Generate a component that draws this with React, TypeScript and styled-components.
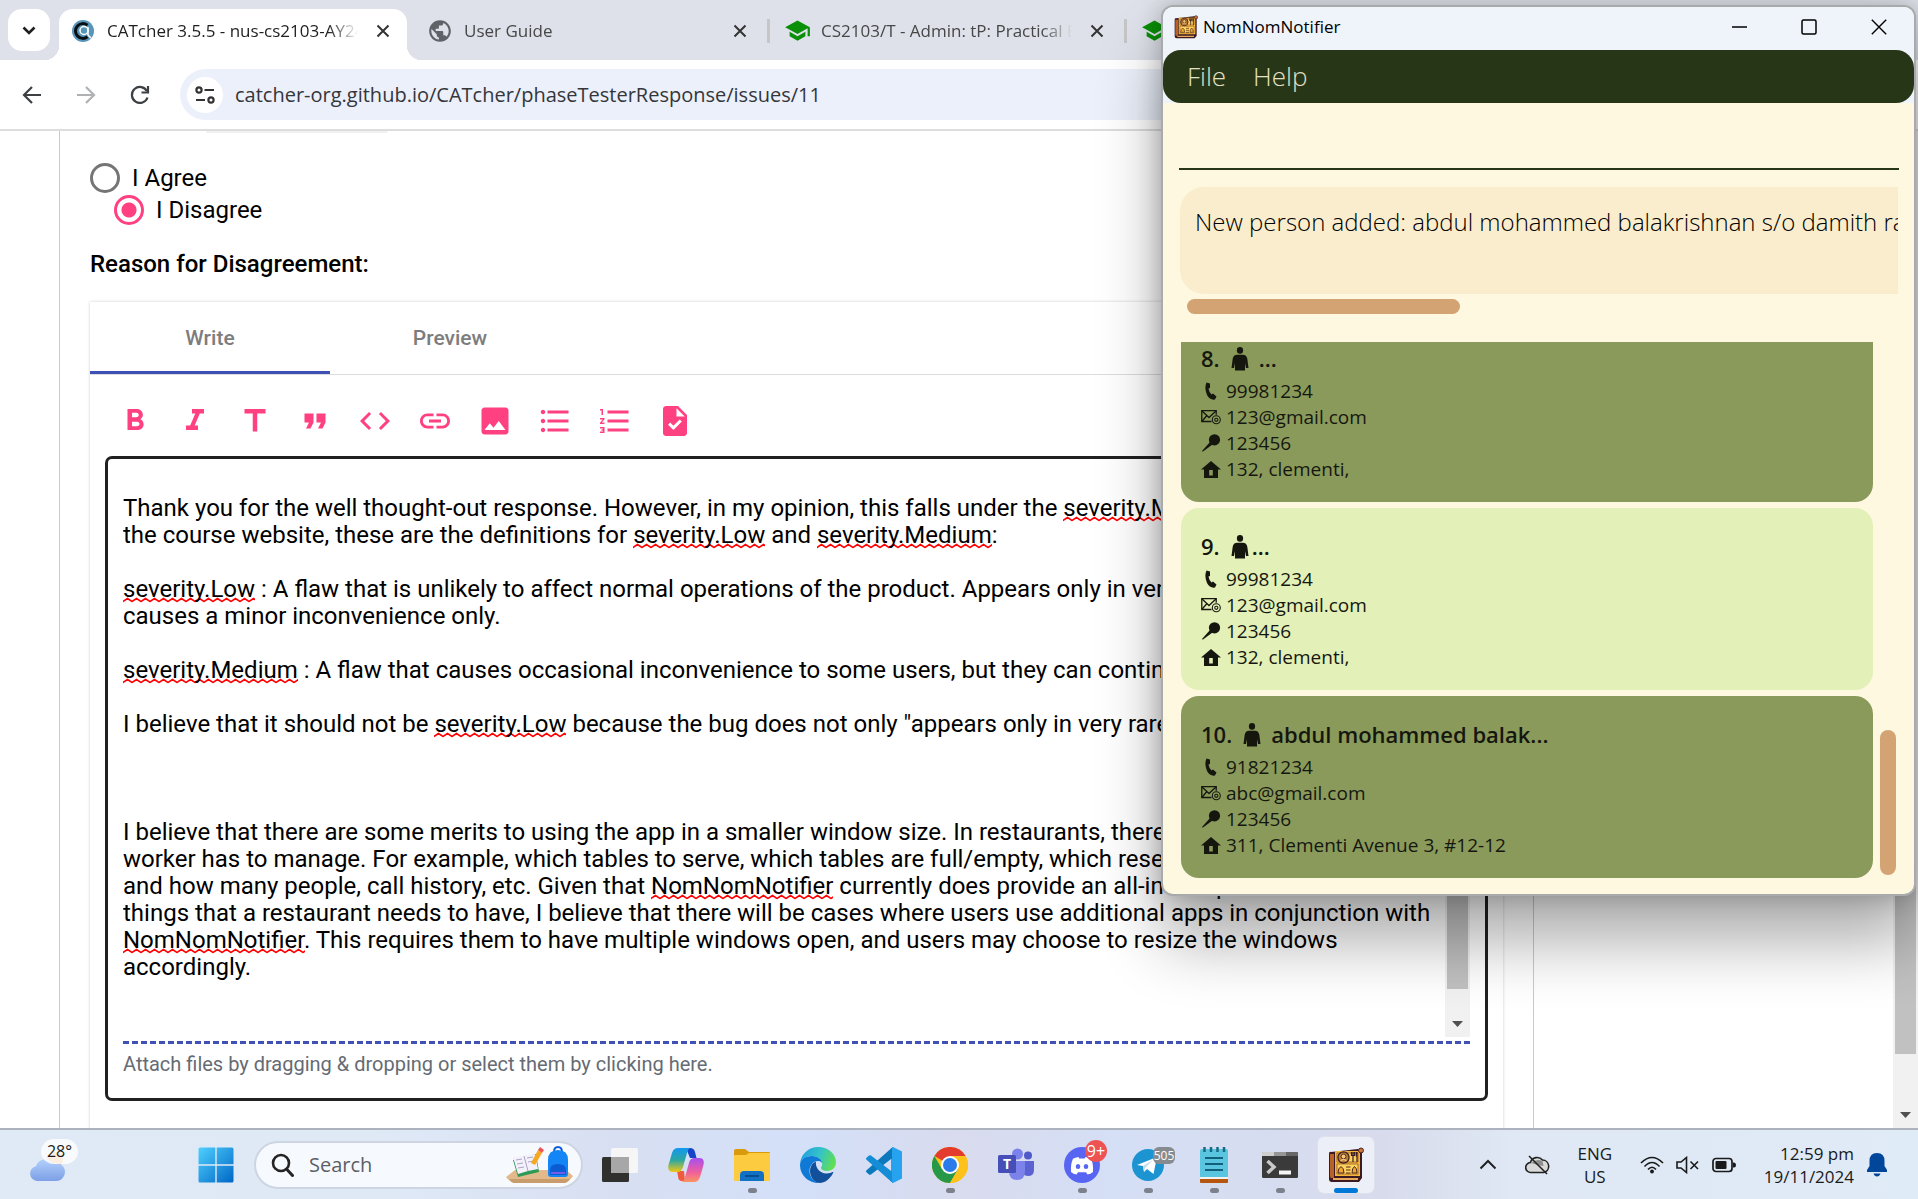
import React, { useMemo } from "react";
import styled, { createGlobalStyle, css } from "styled-components";
import {
  MdCode,
  MdFormatBold,
  MdFormatItalic,
  MdFormatListBulleted,
  MdFormatListNumbered,
  MdFormatQuote,
  MdImage,
  MdInsertLink,
  MdPublic,
  MdSchool,
  MdTask,
  MdTitle,
} from "react-icons/md";

const ui = `"Segoe UI", "Open Sans", "Noto Sans", sans-serif`;
const roboto = `Roboto, "Liberation Sans", sans-serif`;
const squiggle = `url("data:image/svg+xml,%3Csvg xmlns='http://www.w3.org/2000/svg' width='9' height='6'%3E%3Cpath d='M-1 4.5 L0 4.5 L4.5 1.5 L9 4.5 L10 4.5' fill='none' stroke='%23f00' stroke-width='1.6'/%3E%3C/svg%3E")`;

const GlobalStyle = createGlobalStyle`
  *, *::before, *::after { box-sizing: border-box; }
  body { margin: 0; background: #fff; overflow: hidden; }
  button, input, textarea { font: inherit; color: inherit; margin: 0; }
  button { border: 0; padding: 0; background: none; cursor: pointer; }
  svg { display: block; flex: none; }
`;

const Desktop = styled.div`
  position: relative;
  display: flex;
  flex-direction: column;
  height: 100vh;
  overflow: hidden;
  font-family: ${ui};
`;

/* ---------- browser chrome ---------- */

const TabStrip = styled.div`
  display: flex;
  align-items: flex-end;
  height: 60px;
  flex: none;
  padding-left: 8px;
  background: #dee1e9;
  overflow: hidden;
`;

const TabSearch = styled.button`
  display: grid;
  place-items: center;
  width: 42px;
  height: 42px;
  margin: 0 9px 9px 0;
  border-radius: 14px;
  background: #fff;
`;

const Tab = styled.div<{ $active?: boolean }>`
  position: relative;
  display: flex;
  align-items: center;
  flex: none;
  width: 348px;
  height: 51px;
  padding: 0 12px 8px 12px;
  border-radius: 14px 14px 0 0;
  font-size: 17px;
  line-height: 24px;
  color: ${(p) => (p.$active ? "#1f1f1f" : "#474747")};
  ${(p) =>
    p.$active &&
    css`
      background: #fff;
      &::before,
      &::after {
        content: "";
        position: absolute;
        bottom: 0;
        width: 14px;
        height: 14px;
      }
      &::before {
        left: -14px;
        background: radial-gradient(circle at 0 0, transparent 14px, #fff 14px);
      }
      &::after {
        right: -14px;
        background: radial-gradient(circle at 100% 0, transparent 14px, #fff 14px);
      }
    `}
`;

const TabIcon = styled.span`
  display: grid;
  place-content: center;
  width: 24px;
  margin-right: 12px;
`;

const TabTitle = styled.span`
  flex: 1;
  min-width: 0;
  overflow: hidden;
  white-space: nowrap;
  mask-image: linear-gradient(to right, #000 88%, transparent);
`;

const TabClose = styled.button`
  display: grid;
  place-items: center;
  width: 24px;
  height: 24px;
  margin-left: 13px;
`;

const TabDivider = styled.span<{ $hidden?: boolean }>`
  flex: none;
  width: 3px;
  height: 24px;
  margin: 0 3px 17px;
  background: ${(p) => (p.$hidden ? "transparent" : "#c6c6c8")};
`;

const AddressBar = styled.div`
  display: flex;
  align-items: center;
  flex: none;
  height: 71px;
  padding: 0 360px 0 5px;
  border-bottom: 2px solid #dcdddd;
  background: #fff;
`;

const NavButton = styled.button`
  display: grid;
  place-items: center;
  width: 54px;
  height: 48px;
`;

const Omnibox = styled.label`
  display: flex;
  align-items: center;
  flex: 1;
  height: 51px;
  margin-left: 13px;
  padding-left: 7px;
  border-radius: 26px;
  background: #ebf0fa;
`;

const SiteInfo = styled.span`
  display: grid;
  place-items: center;
  width: 36px;
  height: 36px;
  border-radius: 50%;
  background: #fff;
`;

const UrlInput = styled.input`
  flex: 1;
  min-width: 0;
  margin-left: 12px;
  padding: 0;
  border: 0;
  outline: 0;
  background: none;
  font-size: 20px;
  line-height: 28px;
  color: #35363a;
`;

/* ---------- web page ---------- */

const Viewport = styled.div`
  display: flex;
  flex: 1;
  min-height: 0;
  overflow: hidden;
  background: #fff;
  font-family: ${roboto};
`;

const Sheet = styled.main`
  flex: 1;
  min-width: 0;
  margin: 0 359px 0 59px;
  padding: 0 30px 0 30px;
  border: solid #bccce6;
  border-width: 0 1px;
`;

const ChipEdge = styled.div`
  width: 182px;
  height: 2px;
  margin-left: 116px;
  border-radius: 0 0 8px 8px;
  background: #f0f0f0;
`;

const Choices = styled.fieldset`
  display: flex;
  flex-direction: column;
  gap: 2px;
  margin: 30px 0 0;
  padding: 0;
  border: 0;
`;

const Choice = styled.label<{ $indent?: boolean }>`
  display: flex;
  align-items: center;
  gap: 12px;
  height: 30px;
  margin-left: ${(p) => (p.$indent ? 24 : 0)}px;
  font-size: 24px;
  line-height: 30px;
  color: #000;
`;

const Radio = styled.input`
  appearance: none;
  width: 30px;
  height: 30px;
  border: 3px solid #757575;
  border-radius: 50%;
  &:checked {
    border-color: #ff4081;
    background: radial-gradient(circle, #ff4081 7px, transparent 8px);
  }
`;

const Heading = styled.h2`
  margin: 23px 0 0;
  font-size: 24px;
  line-height: 32px;
  font-weight: 500;
  color: #000;
`;

const EditorCard = styled.section`
  height: 900px;
  margin-top: 22px;
  box-shadow: 0 0 3px rgba(0, 0, 0, 0.2);
`;

const EditorTabs = styled.div`
  display: flex;
  height: 73px;
  border-bottom: 1px solid #dcdcdc;
`;

const EditorTab = styled.button<{ $active?: boolean }>`
  width: 240px;
  padding-top: 2px;
  border-bottom: 3px solid ${(p) => (p.$active ? "#3f51b5" : "transparent")};
  font-size: 21px;
  line-height: 28px;
  font-weight: 500;
  color: #7d7d7d;
`;

const FormatBar = styled.div`
  display: flex;
  padding: 16px 15px 6px;
`;

const FormatButton = styled.button`
  display: grid;
  place-items: center;
  width: 60px;
  height: 60px;
  color: #ff4081;
  font-size: 36px;
`;

const EditorBox = styled.div`
  margin: -1px 15px 0;
  padding: 8px 15px 20px;
  border: 3px solid #212121;
  border-radius: 7px;
`;

const EditorScroll = styled.div`
  display: grid;
  grid-template-columns: 1fr 25px;
  height: 570px;
`;

const writing = css`
  grid-area: 1 / 1;
  width: 100%;
  height: 100%;
  margin: 0;
  padding: 28px 0 0;
  overflow: hidden;
`;

const SpellLayer = styled.div`
  ${writing}
`;

const SpellLine = styled.div`
  display: flex;
  align-items: flex-end;
  height: 27px;
`;

const Squiggle = styled.span`
  flex: none;
  height: 6px;
  background: ${squiggle} left bottom repeat-x;
`;

const WritingArea = styled.textarea`
  ${writing}
  display: block;
  white-space: pre;
  font-family: ${roboto};
  font-size: 24px;
  line-height: 27px;
  border: 0;
  outline: 0;
  resize: none;
  background: transparent;
  color: #000;
`;

const ScrollTrack = styled.div<{ $top: number; $bottom: number }>`
  display: flex;
  flex-direction: column;
  align-items: center;
  flex: none;
  width: 25px;
  padding: ${(p) => p.$top}px 2px 10px;
  background: #f1f1f1;
  &::before {
    content: "";
    flex: 1;
    width: 100%;
    margin-bottom: ${(p) => p.$bottom}px;
    background: #c1c1c1;
  }
`;

const Attach = styled.button`
  display: block;
  width: 100%;
  margin-top: 4px;
  padding-top: 6px;
  border-top: 3px dashed #3f51b5;
  text-align: left;
  font-size: 20px;
  line-height: 28px;
  color: #656b74;
`;

/* ---------- NomNomNotifier window ---------- */

const AppWindow = styled.section`
  position: absolute;
  top: 5px;
  right: 2px;
  display: flex;
  flex-direction: column;
  width: 755px;
  height: 891px;
  border: 2px solid #a8aaac;
  border-radius: 12px;
  background: #fef8e0;
  overflow: hidden;
  box-shadow: 0 46px 64px rgba(0, 0, 0, 0.32), 0 0 24px rgba(0, 0, 0, 0.24);
`;

const TitleBar = styled.header`
  display: flex;
  align-items: center;
  height: 43px;
  padding: 0 0 3px 11px;
  background: #eff3fa;
  font-size: 17px;
  line-height: 24px;
  color: #000;
`;

const WindowTitle = styled.h1`
  flex: 1;
  margin: 0 0 0 5px;
  font: inherit;
`;

const WindowButton = styled.button`
  display: grid;
  place-items: center;
  width: 70px;
  height: 40px;
`;

const MenuBarSeat = styled.div`
  background: #eff3fa;
`;

const MenuBar = styled.nav`
  display: flex;
  gap: 27px;
  height: 53px;
  padding: 0 24px;
  border-radius: 18px;
  background: #283618;
`;

const MenuButton = styled.button`
  font-size: 26px;
  line-height: 53px;
  font-weight: 300;
  color: #e4e0c4;
`;

const CommandInput = styled.input`
  height: 67px;
  margin: 0 15px 0 16px;
  padding: 20px 8px 0;
  border: 0;
  border-bottom: 2px solid #283618;
  outline: 0;
  background: none;
  font-size: 24px;
  flex: none;
`;

const ResultBox = styled.output`
  flex: none;
  height: 107px;
  margin: 17px 16px 0 17px;
  padding: 18px 0 0 15px;
  border-radius: 24px 0 0 24px;
  background: #faedcd;
  overflow: hidden;
  white-space: nowrap;
  font-size: 24px;
  line-height: 34px;
  font-weight: 300;
  color: #000;
`;

const ResultThumb = styled.div`
  flex: none;
  width: 273px;
  height: 15px;
  margin: 5px 0 28px 24px;
  border-radius: 8px;
  background: #d4a373;
`;

const PeoplePane = styled.div`
  display: flex;
  flex: 1;
  gap: 7px;
  min-height: 0;
  padding: 0 18px 16px 18px;
`;

const PeopleList = styled.ul`
  display: flex;
  flex: 1;
  flex-direction: column;
  justify-content: flex-end;
  gap: 6px;
  margin: 0;
  padding: 0;
  overflow: hidden;
  list-style: none;
`;

const ListThumb = styled.div`
  align-self: flex-end;
  width: 16px;
  height: 145px;
  margin-bottom: 3px;
  border-radius: 8px;
  background: #d4a373;
`;

const PersonCard = styled.li<{ $light?: boolean }>`
  flex: none;
  padding: 21px 20px 20px;
  border-radius: 18px;
  background: ${(p) => (p.$light ? "#e3f0b8" : "#8a9a5b")};
  color: #15170f;
`;

const PersonName = styled.h3<{ $tight?: boolean }>`
  display: flex;
  align-items: center;
  margin: 0 0 2px;
  font-size: 22px;
  line-height: 35px;
  font-weight: 600;
  svg {
    margin: 0 ${(p) => (p.$tight ? 3 : 10)}px 0 11px;
  }
`;

const Detail = styled.p`
  display: flex;
  align-items: center;
  gap: 5px;
  margin: 0;
  font-size: 19px;
  line-height: 26px;
`;

/* ---------- taskbar ---------- */

const TaskBar = styled.footer`
  display: flex;
  align-items: center;
  flex: none;
  height: 71px;
  padding: 0 31px 0 28px;
  border-top: 2px solid #adb3be;
  background: linear-gradient(
    to right,
    #dfeaf6 0%,
    #dfe9f6 20%,
    #d8dff2 32%,
    #d3e0f8 42%,
    #d9dbee 50%,
    #d5dff5 58%,
    #d8dbec 72%,
    #dfe8f4 79%,
    #dfebf7 100%
  );
  color: #1a1a1a;
`;

const Weather = styled.button`
  position: relative;
  width: 50px;
  height: 56px;
  margin-right: 120px;
`;

const WeatherBadge = styled.span`
  position: absolute;
  top: 2px;
  right: 0;
  width: 37px;
  border-radius: 13px;
  background: rgba(252, 252, 252, 0.88);
  font-size: 16px;
  line-height: 25px;
  text-align: center;
`;

const SearchPill = styled.label`
  display: flex;
  align-items: center;
  width: 329px;
  height: 48px;
  margin: 0 4px 0 20px;
  padding: 0 7px 0 15px;
  border: 2px solid #cdd5e3;
  border-radius: 24px;
  background: #f6f9fd;
`;

const SearchInput = styled.input`
  flex: 1;
  min-width: 0;
  margin-left: 15px;
  padding: 0;
  border: 0;
  outline: 0;
  background: none;
  font-size: 20px;
  line-height: 28px;
  &::placeholder {
    color: #5c5f66;
    opacity: 1;
  }
`;

const TaskSlot = styled.button<{ $state?: "open" | "active" }>`
  position: relative;
  display: grid;
  place-items: center;
  width: 56px;
  height: 56px;
  margin: 0 5px;
  border-radius: 6px;
  ${(p) => p.$state === "active" && "background: #eceff8; box-shadow: 0 0 0 1px #dde1ec;"}
  &::after {
    content: "";
    position: absolute;
    bottom: 0;
    height: 5px;
    border-radius: 3px;
    width: ${(p) => (p.$state === "active" ? 24 : p.$state === "open" ? 9 : 0)}px;
    background: ${(p) => (p.$state === "active" ? "#0078d7" : "#7c818c")};
  }
`;

const Badge = styled.span<{ $grey?: boolean }>`
  position: absolute;
  top: ${(p) => (p.$grey ? 10 : 3)}px;
  right: ${(p) => (p.$grey ? 1 : 3)}px;
  width: 22px;
  border-radius: ${(p) => (p.$grey ? 6 : 11)}px;
  background: ${(p) => (p.$grey ? "#878b8f" : "#ee5353")};
  color: #fff;
  font-size: ${(p) => (p.$grey ? 12 : 16)}px;
  line-height: ${(p) => (p.$grey ? 17 : 22)}px;
  text-align: center;
`;

const Tray = styled.div`
  display: flex;
  align-items: center;
  gap: 28px;
  margin-left: auto;
  font-size: 17px;
  line-height: 23px;
`;

const Language = styled.button`
  width: 34px;
  display: flex;
  flex-direction: column;
  align-items: center;
`;

const QuickSettings = styled.button`
  display: flex;
  align-items: center;
  gap: 12px;
`;

const ClockGroup = styled.button`
  display: flex;
  align-items: center;
  gap: 13px;
  text-align: right;
`;

const ClockText = styled.span`
  display: flex;
  flex-direction: column;
`;

/* ---------- drawings ---------- */

const CloseGlyph = () => (
  <svg width="14" height="14" viewBox="0 0 14 14" stroke="#333" strokeWidth="2">
    <path d="M1.5 1.5 12.5 12.5M12.5 1.5 1.5 12.5" />
  </svg>
);

const DownArrow = () => (
  <svg width="11" height="6" viewBox="0 0 11 6" fill="#505050">
    <path d="M0 0h11L5.500 6z" />
  </svg>
);

const CatcherLogo = () => (
  <svg width="22" height="22" viewBox="0 0 22 22" fill="none">
    <circle cx="11" cy="11" r="11" fill="#5796b8" />
    <path d="M15.500 5.200A7.400 7.400 0 1 0 15.500 16.800" stroke="#0b0f12" strokeWidth="3" />
    <circle cx="12" cy="10.500" r="4" stroke="#fff" strokeWidth="1.500" />
    <path d="M16 7v8l3 3" stroke="#fff" strokeWidth="1.500" />
  </svg>
);

const BackArrow = ({ color = "#3c4043", flip = false }: { color?: string; flip?: boolean }) => (
  <svg width="20" height="20" viewBox="0 0 20 20" fill="none" stroke={color} strokeWidth="2.200">
    <path d={flip ? "M1 10h17M10 2l8 8-8 8" : "M19 10H2M10 2l-8 8 8 8"} />
  </svg>
);

const ReloadGlyph = () => (
  <svg width="20" height="20" viewBox="0 0 20 20" fill="none" stroke="#3c4043" strokeWidth="2.200">
    <path d="M17.500 12.500A8 8 0 1 1 17 6.200" />
    <path d="M18 1v6.500h-6.500" />
  </svg>
);

const TuneGlyph = () => (
  <svg width="20" height="18" viewBox="0 0 20 18" fill="none" stroke="#333" strokeWidth="2.200">
    <circle cx="4" cy="4" r="2.600" />
    <path d="M9.500 4H19M1 14h9" />
    <circle cx="16" cy="14" r="2.600" />
  </svg>
);

const RecipeBook = ({ size }: { size: number }) => (
  <svg width={size} height={size} viewBox="0 0 36 36">
    <path d="M3 5 Q1 4 1 7V32Q1 35 4 35H31L34 31V4L30 2z" fill="#3b1a22" />
    <path d="M2 7h4v24H3q-1 0-1-2z" fill="#b8622a" />
    <path d="M7 4h25v25H7z" fill="#f2b73c" />
    <path d="M5 31h25v2H5z" fill="#e9a75a" />
    <path d="M9 6h21v9H9zM9 17h21v10H9z" fill="#fbd35e" stroke="#8a4c1c" strokeWidth="0.700" />
    <circle cx="15.500" cy="10.500" r="5.600" fill="#b57a34" stroke="#3b1a22" strokeWidth="1.200" />
    <circle cx="15.500" cy="9.500" r="2.400" fill="#f4c878" stroke="#3b1a22" strokeWidth="0.800" />
    <path d="M12.500 14q3-3 6 0" stroke="#f4c878" strokeWidth="1.200" fill="none" />
    <path d="M25 5v10M29 5v10M23.500 5v3.500h3V5M28.300 5v4.500" stroke="#3b1a22" strokeWidth="1.200" fill="none" />
    <path d="M10 26q0-5 3-6.500 3 1.500 3 6.500zM24 26q0-5 2.500-6.500Q29 21 29 26z" fill="#f0a62f" stroke="#3b1a22" strokeWidth="0.900" />
    <path d="M18 20h4.500M18 23h4.500M18 26h4.500" stroke="#5a2b14" strokeWidth="1.100" />
    <circle cx="33" cy="3.500" r="2.500" fill="#c8743a" stroke="#3b1a22" strokeWidth="0.900" />
  </svg>
);

const PersonGlyph = () => (
  <svg width="18" height="24" viewBox="0 0 18 24" fill="currentColor">
    <ellipse cx="9" cy="3.400" rx="3.100" ry="3.300" />
    <path d="M6 7.800h6q3.500.2 4.300 4l1.200 9.200h-2.500L14 16v7.500H4V16l-1 5H.5l1.200-9.200Q2.500 8 6 7.800z" />
  </svg>
);

const PhoneGlyph = () => (
  <svg width="20" height="18" viewBox="0 0 20 18" fill="currentColor">
    <path d="M5.500 0.500 9 1.500 9 6 7.500 6.500Q8 10 10.500 12.500L12 11.500 15.500 14.500 14 17.500Q9 18.500 6 13Q3 6 5.500 0.500z" />
  </svg>
);

const MailGlyph = () => (
  <svg width="20" height="16" viewBox="0 0 20 16" fill="none" stroke="currentColor" strokeWidth="1.300">
    <path d="M10.500 12.500H.8V1.700h14.400v4" />
    <path d="M.8 1.700 8 8.500l7.200-6.800M.8 12.500 5.500 7" />
    <circle cx="15.300" cy="10.800" r="4" strokeWidth="1.100" />
    <circle cx="15.300" cy="10.800" r="1.600" strokeWidth="1.100" />
  </svg>
);

const PinGlyph = () => (
  <svg width="20" height="18" viewBox="0 0 20 18" fill="currentColor">
    <circle cx="13.500" cy="5.800" r="5.600" />
    <path d="M9 8l2.500 2.500L2 17.500.8 17.200z" />
  </svg>
);

const HouseGlyph = () => (
  <svg width="20" height="17" viewBox="0 0 20 17" fill="currentColor" fillRule="evenodd">
    <path d="M10 0 20 8.500H17V17H3V8.500H0zM8.200 9v5.500h3.600V9z" />
  </svg>
);

const CloudSun = () => (
  <svg width="36" height="30" viewBox="0 0 36 30">
    <defs>
      <linearGradient id="cloud" x1="0" y1="0" x2="0" y2="1">
        <stop offset="0" stopColor="#b3d0fb" />
        <stop offset="1" stopColor="#7c9fe6" />
      </linearGradient>
    </defs>
    <circle cx="26" cy="7" r="8" fill="#f08a24" />
    <path d="M8 29a7.500 7.500 0 0 1-1-14.800A9.500 9.500 0 0 1 24 11.500 9 9 0 1 1 27 29z" fill="url(#cloud)" />
  </svg>
);

const WeatherArt = styled.span`
  position: absolute;
  left: 1px;
  bottom: 11px;
`;

const StartLogo = () => (
  <svg width="36" height="36" viewBox="0 0 36 36">
    <defs>
      <linearGradient id="win" x1="0" y1="0" x2="1" y2="1">
        <stop offset="0" stopColor="#4fd0ff" />
        <stop offset="1" stopColor="#0067c5" />
      </linearGradient>
    </defs>
    <path
      fill="url(#win)"
      d="M2 .5h15.300v16.800H.5V2Q.5.5 2 .5zM18.700.5H34q1.500 0 1.500 1.500v15.300H18.700zM.5 18.700h16.800v16.800H2q-1.500 0-1.500-1.500zM18.700 18.700h16.800V34q0 1.500-1.500 1.500H18.700z"
    />
  </svg>
);

const SearchGlyph = () => (
  <svg width="23" height="24" viewBox="0 0 23 24" fill="none" stroke="#242424" strokeWidth="2.600">
    <circle cx="10" cy="10" r="8" />
    <path d="m15.500 16 6 6.500" strokeLinecap="round" strokeWidth="3" />
  </svg>
);

const SchoolArt = () => (
  <svg width="68" height="38" viewBox="0 0 68 38">
    <path d="M0 31 9 24H60L67 30Q62 37 58 37H8Q4 36 0 31z" fill="#e2b98a" />
    <path d="M3 33H64Q61 37 58 37H8Q5 36 3 33z" fill="#c99c6c" />
    <path d="M7 14 30 8 33 26 12 31z" fill="#2f9a55" />
    <path d="M7 11 18 10 29 8 32 23 22 25 12 28z" fill="#f4f1fb" />
    <path d="M18 10 22 25M10 14l6-1M11 18l6-1M12 22l6-1M21 12l6-1M22 16l6-1" stroke="#a9a3c8" fill="none" />
    <path d="M25 17 32 4 36 7 29 19z" fill="#f6a821" />
    <path d="M32 4 34 1 38 4 36 7z" fill="#ef5350" />
    <path d="M48 6q0-5 4-5t4 5" stroke="#0d5fd6" strokeWidth="2" fill="none" />
    <path d="M42 14q0-10 10-10t10 10v14q0 3-3 3H45q-3 0-3-3z" fill="#1385f5" />
    <path d="M44 24q0-6 8-6t8 6v5H44z" fill="#0b5bd3" />
    <path d="M45 27h14" stroke="#9a5df0" strokeWidth="1.500" />
  </svg>
);

const TaskViewGlyph = () => (
  <svg width="36" height="36" viewBox="0 0 36 36">
    <rect x="0" y="10" width="27" height="25" rx="1.500" fill="#30302f" />
    <rect x="9" y="1" width="27" height="25" rx="1.500" fill="#f6f6f6" />
    <path d="M9 10h18v16H10q-1 0-1-1z" fill="#a7a7a7" />
  </svg>
);

const CopilotLogo = () => (
  <svg width="36" height="34" viewBox="0 0 36 34">
    <defs>
      <linearGradient id="cpA" x1="0" y1="0" x2="0" y2="1">
        <stop offset="0" stopColor="#1597f0" />
        <stop offset=".5" stopColor="#2aa7a4" />
        <stop offset="1" stopColor="#f2c812" />
      </linearGradient>
      <linearGradient id="cpB" x1="0" y1="0" x2="0" y2="1">
        <stop offset="0" stopColor="#a64ff0" />
        <stop offset=".6" stopColor="#f0609c" />
        <stop offset="1" stopColor="#fa9461" />
      </linearGradient>
    </defs>
    <path d="M18 0h4q4 0 5 4l1.500 6H22z" fill="#1745c7" />
    <path d="M17 33h-3q-4 0-4-5l-1-5h7z" fill="#ef5b3c" />
    <path d="M10 0h12q-2 1-3 5l-4 14q-1 5-6 5H5Q-1 24 .5 17L4 5q1.500-5 6-5z" fill="url(#cpA)" />
    <path d="M26 34H14q2-1 3-5l4-14q1-5 6-5h4q6 0 4.500 7L32 29q-1.500 5-6 5z" fill="url(#cpB)" />
  </svg>
);

const FolderLogo = () => (
  <svg width="36" height="34" viewBox="0 0 36 34">
    <path d="M0 3q0-2 2-2h9l4 3h20q1 0 1 1v8H0z" fill="#d99a0c" />
    <path d="M0 8q0-1 1-1h11l3-2h21v27q0 1-1 1H1q-1 0-1-1z" fill="#fdcb3f" />
    <path d="M6 33v-6q0-4 4-4h16q4 0 4 4v6z" fill="#1271c4" />
    <path d="M11 28h14" stroke="#0a4a8c" strokeWidth="1.800" />
  </svg>
);

const EdgeLogo = () => (
  <svg width="36" height="36" viewBox="0 0 36 36">
    <defs>
      <linearGradient id="edA" x1="0" y1=".3" x2="1" y2=".6">
        <stop offset="0" stopColor="#1f9fe0" />
        <stop offset=".5" stopColor="#35c3c8" />
        <stop offset="1" stopColor="#63e04c" />
      </linearGradient>
    </defs>
    <path d="M0 17A18 18 0 0 1 18 0c11 0 18 7.500 18 15 0 6-4.500 9-9 9-4 0-6-1.500-6-3 0-1 1.200-1.500 1.200-4C22 13 18 9 12 9 5 9 0 14 0 17z" fill="url(#edA)" />
    <path d="M0 18C0 13 5 9 12 9c6 0 10 4 10.200 7-1-1.500-3-2-4.200-2-5 0-8.500 5-8.500 10 0 6 4.500 11 10 12A18 18 0 0 1 0 18z" fill="#0f7ad6" />
    <path d="M10 24c0-4 2-8 6-9.500-1 5 3 12 10.500 12 3 0 5-1 6-1.500.8-.3 1 .3.600 1C30 32 25 36 19.500 36 14 35.500 10 30 10 24z" fill="#12509c" />
  </svg>
);

const CodeLogo = () => (
  <svg width="36" height="36" viewBox="0 0 36 36">
    <path d="M27 0 36 4.500v27L27 36 25 34V2z" fill="#26a2ee" />
    <path d="M27 10.500 5 27.500q-1 .6-2 0l-2.500-2.300q-1-1 0-2L25 1.500 27 0z" fill="#0d79bd" />
    <path d="M27 25.500 5 8.500q-1-.6-2 0L.5 10.800q-1 1 0 2L25 34.500 27 36z" fill="#148dd6" />
    <path d="M27 0v36l-1-1V1z" fill="#26a2ee" />
  </svg>
);

const ChromeLogo = () => (
  <svg width="36" height="36" viewBox="0 0 36 36">
    <circle cx="18" cy="18" r="18" fill="#fcc21b" />
    <path d="M18 18 2.400 9A18 18 0 0 1 33.600 9z" fill="#e33b2e" />
    <path d="M18 18 10.200 22.500 2.400 9a18 18 0 0 0 15.600 27l7.800-13.500z" fill="#279847" />
    <path d="M18 9h15.600A18 18 0 0 1 18 36l8-13.500z" fill="#fcc21b" />
    <circle cx="18" cy="18" r="9" fill="#fff" />
    <circle cx="18" cy="18" r="7" fill="#2c7bea" />
  </svg>
);

const TeamsTile = styled.span`
  position: relative;
  display: block;
`;

const TeamsLetter = styled.span`
  position: absolute;
  left: 0;
  top: 7px;
  width: 18px;
  font-size: 14px;
  line-height: 18px;
  font-weight: 700;
  color: #fff;
`;

const TeamsLogo = () => (
  <TeamsTile>
    <svg width="36" height="34" viewBox="0 0 36 34">
      <circle cx="19.500" cy="6" r="5.500" fill="#7b83eb" />
      <circle cx="30" cy="7.500" r="4" fill="#5059c9" />
      <path d="M25 13h11v9q0 6-6 6-3 0-5-2z" fill="#5b63d3" />
      <path d="M11 13h16v10q0 9-8 9t-8-9z" fill="#7b83eb" />
      <rect x="0" y="7" width="18" height="18" rx="1.500" fill="#464eb8" />
    </svg>
    <TeamsLetter>T</TeamsLetter>
  </TeamsTile>
);

const DiscordLogo = () => (
  <svg width="36" height="36" viewBox="0 0 36 36">
    <circle cx="18" cy="18" r="18" fill="#5865f2" />
    <path
      fill="#fff"
      fillRule="evenodd"
      d="M14.500 10q-3.500.5-5.500 1.800Q6.500 17 7 25q2.500 2 5.500 2.500l1.500-2.300h8l1.500 2.300Q26.500 27 29 25q.5-8-2-13.200Q25 10.500 21.500 10l-.8 1.500h-5.400zM14 17a2.300 2.500 0 1 0 0 5 2.300 2.500 0 0 0 0-5zm8 0a2.300 2.500 0 1 0 0 5 2.300 2.500 0 0 0 0-5z"
    />
  </svg>
);

const TelegramLogo = () => (
  <svg width="34" height="34" viewBox="0 0 34 34">
    <circle cx="17" cy="17" r="16" fill="#1d94d2" />
    <path d="M6 17 26 9l-3.500 17-6.500-5-3 3-1-6z" fill="#fff" />
    <path d="m12 18 10-6-8 8-1 4z" fill="#c1dbea" />
  </svg>
);

const NotepadLogo = () => (
  <svg width="28" height="36" viewBox="0 0 28 36">
    <path d="M0 30h28v5q0 1-1 1H1q-1 0-1-1z" fill="#b7560f" />
    <path d="M0 28h28v4H0z" fill="#f2f2f2" />
    <path d="M0 4q0-2 2-2h24q2 0 2 2v26H0z" fill="#59c5de" />
    <path d="M4.500 0v5M11 0v5M17.500 0v5M24 0v5" stroke="#176a86" strokeWidth="2.500" />
    <path d="M5 11h18M5 17h18M5 23h18" stroke="#12617c" strokeWidth="2" />
  </svg>
);

const TerminalLogo = () => (
  <svg width="36" height="28" viewBox="0 0 36 28">
    <rect y="1" width="36" height="26" rx="1.500" fill="#3a3a3a" />
    <path d="M0 5V2q0-1 1-1h11v4z" fill="#cfcfcf" />
    <path d="M12 1h12v4H12z" fill="#969696" />
    <path d="M24 1h11q1 0 1 1v3H24z" fill="#676767" />
    <path d="m5.500 10 6.500 6-6.500 6" stroke="#c9c9c9" strokeWidth="3.500" fill="none" />
    <rect x="17" y="19.500" width="12" height="4" fill="#f5f5f5" />
  </svg>
);

const ChevronUp = () => (
  <svg width="18" height="11" viewBox="0 0 18 11" fill="none" stroke="#222" strokeWidth="2">
    <path d="m1.500 9.500 7.500-7.500 7.500 7.500" />
  </svg>
);

const OfflineCloud = () => (
  <svg width="25" height="20" viewBox="0 0 25 20" fill="none" stroke="#222" strokeWidth="1.600">
    <path d="M6 17.500a5 5 0 0 1-.6-10A7 7 0 0 1 17.500 5 6.300 6.300 0 0 1 18.500 17.500z" fill="#d9d9d9" />
    <path d="M6 8Q12 3 17.500 6l1 5-6-1z" fill="#8d8d8d" stroke="none" />
    <path d="M4 1l18 18" />
  </svg>
);

const WifiGlyph = () => (
  <svg width="24" height="18" viewBox="0 0 24 18" fill="none" stroke="#1a1a1a" strokeWidth="1.700">
    <path d="M1 7Q12-4 23 7M4.500 10.500Q12 2.500 19.500 10.500M8 13.500Q12 9 16 13.500" />
    <circle cx="12" cy="15.500" r="1.900" fill="#1a1a1a" stroke="none" />
  </svg>
);

const MuteGlyph = () => (
  <svg width="24" height="18" viewBox="0 0 24 18" fill="none" stroke="#1a1a1a" strokeWidth="1.600">
    <path d="M1 6h4l5.500-4.500v15L5 12H1zM14.500 5.500l7.500 7.500M22 5.500 14.500 13" />
  </svg>
);

const BatteryGlyph = () => (
  <svg width="24" height="16" viewBox="0 0 24 16" fill="none">
    <rect x="1" y="1.500" width="19" height="13" rx="3" stroke="#1a1a1a" strokeWidth="1.700" />
    <rect x="3.500" y="4" width="11" height="8" rx="1" fill="#1a1a1a" />
    <path d="M21 5.500h1q2 0 2 2.500t-2 2.500h-1z" fill="#1a1a1a" />
  </svg>
);

const BellGlyph = () => (
  <svg width="20" height="24" viewBox="0 0 20 24" fill="#00469b">
    <path d="M10 0q7.500 0 7.500 8v5l2.500 4v2H0v-2l2.500-4V8Q2.500 0 10 0zM6.500 20.500h7q-1 3-3.500 3t-3.500-3z" />
  </svg>
);

/* ---------- content ---------- */

const response = `Thank you for the well thought-out response. However, in my opinion, this falls under the severity.Medium label. From
the course website, these are the definitions for severity.Low and severity.Medium:

severity.Low : A flaw that is unlikely to affect normal operations of the product. Appears only in very rare situations and
causes a minor inconvenience only.

severity.Medium : A flaw that causes occasional inconvenience to some users, but they can continue to use the product.

I believe that it should not be severity.Low because the bug does not only "appears only in very rare situations".



I believe that there are some merits to using the app in a smaller window size. In restaurants, there are many things a
worker has to manage. For example, which tables to serve, which tables are full/empty, which reservations are at what time
and how many people, call history, etc. Given that NomNomNotifier currently does provide an all-in-one place for the
things that a restaurant needs to have, I believe that there will be cases where users use additional apps in conjunction with
NomNomNotifier. This requires them to have multiple windows open, and users may choose to resize the windows
accordingly.`;

function findMisspellings(text: string) {
  const pen = document.createElement("canvas").getContext("2d")!;
  pen.font = `24px ${roboto}`;
  return text.split("\n").map((line) => {
    let end = 0;
    return [...line.matchAll(/severity\.(?:Low|Medium)|NomNomNotifier/g)].map((m) => {
      const from = pen.measureText(line.slice(0, m.index)).width;
      const width = pen.measureText(m[0]).width;
      const gap = from - end;
      end = from + width;
      return { gap, width };
    });
  });
}

const SpellMarks = ({ text }: { text: string }) => {
  const lines = useMemo(() => findMisspellings(text), [text]);
  return (
    <SpellLayer aria-hidden="true">
      {lines.map((marks, i) => (
        <SpellLine key={i}>
          {marks.map((m, j) => (
            <Squiggle key={j} style={{ marginLeft: m.gap, width: m.width }} />
          ))}
        </SpellLine>
      ))}
    </SpellLayer>
  );
};

const formats = [
  { label: "Bold", Icon: MdFormatBold },
  { label: "Italic", Icon: MdFormatItalic },
  { label: "Heading", Icon: MdTitle },
  { label: "Quote", Icon: MdFormatQuote },
  { label: "Code", Icon: MdCode },
  { label: "Link", Icon: MdInsertLink },
  { label: "Image", Icon: MdImage },
  { label: "Bulleted list", Icon: MdFormatListBulleted },
  { label: "Numbered list", Icon: MdFormatListNumbered },
  { label: "Task", Icon: MdTask },
];

const people = [
  { no: 8, name: "...", phone: "99981234", mail: "123@gmail.com", postal: "123456", home: "132, clementi," },
  { no: 9, name: "...", tight: true, phone: "99981234", mail: "123@gmail.com", postal: "123456", home: "132, clementi," },
  {
    no: 10,
    name: "abdul mohammed balak...",
    phone: "91821234",
    mail: "abc@gmail.com",
    postal: "123456",
    home: "311, Clementi Avenue 3, #12-12",
  },
];

const BrowserTab = ({ title, icon, active }: { title: string; icon: React.ReactNode; active?: boolean }) => (
  <Tab $active={active}>
    <TabIcon>{icon}</TabIcon>
    <TabTitle>{title}</TabTitle>
    <TabClose aria-label="Close tab">
      <CloseGlyph />
    </TabClose>
  </Tab>
);

const Browser = () => (
  <>
    <TabStrip>
      <TabSearch aria-label="Search tabs">
        <svg width="14" height="9" viewBox="0 0 14 9" fill="none" stroke="#1f1f1f" strokeWidth="2.600">
          <path d="m1.500 1.500 5.500 5.500 5.500-5.500" />
        </svg>
      </TabSearch>
      <BrowserTab active title="CATcher 3.5.5 - nus-cs2103-AY2425S1" icon={<CatcherLogo />} />
      <TabDivider $hidden />
      <BrowserTab title="User Guide" icon={<MdPublic size={26} color="#5f6368" />} />
      <TabDivider />
      <BrowserTab title="CS2103/T - Admin: tP: Practical Exam" icon={<MdSchool size={27} color="#0a8f08" />} />
      <TabDivider />
      <BrowserTab title="CS2103/T" icon={<MdSchool size={27} color="#0a8f08" />} />
    </TabStrip>
    <AddressBar>
      <NavButton aria-label="Back">
        <BackArrow />
      </NavButton>
      <NavButton aria-label="Forward">
        <BackArrow flip color="#b0b1b3" />
      </NavButton>
      <NavButton aria-label="Reload">
        <ReloadGlyph />
      </NavButton>
      <Omnibox>
        <SiteInfo>
          <TuneGlyph />
        </SiteInfo>
        <UrlInput aria-label="Address" defaultValue="catcher-org.github.io/CATcher/phaseTesterResponse/issues/11" />
      </Omnibox>
    </AddressBar>
  </>
);

const Page = () => (
  <Viewport>
    <Sheet>
      <ChipEdge />
      <Choices>
        <Choice>
          <Radio type="radio" name="verdict" />I Agree
        </Choice>
        <Choice $indent>
          <Radio type="radio" name="verdict" defaultChecked />I Disagree
        </Choice>
      </Choices>
      <Heading>Reason for Disagreement:</Heading>
      <EditorCard>
        <EditorTabs>
          <EditorTab $active>Write</EditorTab>
          <EditorTab>Preview</EditorTab>
        </EditorTabs>
        <FormatBar>
          {formats.map(({ label, Icon }) => (
            <FormatButton key={label} aria-label={label}>
              <Icon />
            </FormatButton>
          ))}
        </FormatBar>
        <EditorBox>
          <EditorScroll>
            <SpellMarks text={response} />
            <WritingArea aria-label="Reason" spellCheck={false} defaultValue={response} />
            <ScrollTrack $top={25} $bottom={32}>
              <DownArrow />
            </ScrollTrack>
          </EditorScroll>
          <Attach>Attach files by dragging &amp; dropping or select them by clicking here.</Attach>
        </EditorBox>
      </EditorCard>
    </Sheet>
    <ScrollTrack $top={750} $bottom={58}>
      <DownArrow />
    </ScrollTrack>
  </Viewport>
);

const Notifier = () => (
  <AppWindow>
    <TitleBar>
      <RecipeBook size={24} />
      <WindowTitle>NomNomNotifier</WindowTitle>
      <WindowButton aria-label="Minimise">
        <svg width="15" height="2" viewBox="0 0 15 2">
          <path d="M0 1h15" stroke="#000" strokeWidth="1.400" />
        </svg>
      </WindowButton>
      <WindowButton aria-label="Maximise">
        <svg width="16" height="16" viewBox="0 0 16 16" fill="none" stroke="#000" strokeWidth="1.500">
          <rect x="1" y="1" width="14" height="14" rx="1.500" />
        </svg>
      </WindowButton>
      <WindowButton aria-label="Close">
        <svg width="16" height="16" viewBox="0 0 16 16" stroke="#000" strokeWidth="1.400">
          <path d="m.8.8 14.400 14.400M15.200.8.8 15.200" />
        </svg>
      </WindowButton>
    </TitleBar>
    <MenuBarSeat>
      <MenuBar>
        <MenuButton>File</MenuButton>
        <MenuButton>Help</MenuButton>
      </MenuBar>
    </MenuBarSeat>
    <CommandInput aria-label="Command" />
    <ResultBox>New person added: abdul mohammed balakrishnan s/o damith rajapakse</ResultBox>
    <ResultThumb />
    <PeoplePane>
      <PeopleList>
        {people.map((p) => (
          <PersonCard key={p.no} $light={p.no % 2 === 1}>
            <PersonName $tight={p.tight}>
              {p.no}. <PersonGlyph /> {p.name}
            </PersonName>
            <Detail>
              <PhoneGlyph />
              {p.phone}
            </Detail>
            <Detail>
              <MailGlyph />
              {p.mail}
            </Detail>
            <Detail>
              <PinGlyph />
              {p.postal}
            </Detail>
            <Detail>
              <HouseGlyph />
              {p.home}
            </Detail>
          </PersonCard>
        ))}
      </PeopleList>
      <ListThumb />
    </PeoplePane>
  </AppWindow>
);

const apps: { label: string; art: React.ReactNode; state?: "open" | "active" }[] = [
  { label: "Task view", art: <TaskViewGlyph /> },
  { label: "Copilot", art: <CopilotLogo /> },
  { label: "File Explorer", art: <FolderLogo />, state: "open" },
  { label: "Edge", art: <EdgeLogo /> },
  { label: "Visual Studio Code", art: <CodeLogo /> },
  { label: "Chrome", art: <ChromeLogo />, state: "open" },
  { label: "Teams", art: <TeamsLogo /> },
  {
    label: "Discord",
    art: (
      <>
        <DiscordLogo />
        <Badge>9+</Badge>
      </>
    ),
    state: "open",
  },
  {
    label: "Telegram",
    art: (
      <>
        <TelegramLogo />
        <Badge $grey>505</Badge>
      </>
    ),
    state: "open",
  },
  { label: "Notepad", art: <NotepadLogo />, state: "open" },
  { label: "Terminal", art: <TerminalLogo />, state: "open" },
  { label: "NomNomNotifier", art: <RecipeBook size={36} />, state: "active" },
];

const BottomBar = () => (
  <TaskBar>
    <Weather>
      <WeatherArt>
        <CloudSun />
      </WeatherArt>
      <WeatherBadge>28°</WeatherBadge>
    </Weather>
    <button aria-label="Start">
      <StartLogo />
    </button>
    <SearchPill>
      <SearchGlyph />
      <SearchInput placeholder="Search" />
      <SchoolArt />
    </SearchPill>
    {apps.map((a) => (
      <TaskSlot key={a.label} aria-label={a.label} $state={a.state}>
        {a.art}
      </TaskSlot>
    ))}
    <Tray>
      <button aria-label="Hidden icons">
        <ChevronUp />
      </button>
      <OfflineCloud />
      <Language>
        <span>ENG</span>
        <span>US</span>
      </Language>
      <QuickSettings aria-label="Quick settings">
        <WifiGlyph />
        <MuteGlyph />
        <BatteryGlyph />
      </QuickSettings>
      <ClockGroup>
        <ClockText>
          <span>12:59 pm</span>
          <span>19/11/2024</span>
        </ClockText>
        <BellGlyph />
      </ClockGroup>
    </Tray>
  </TaskBar>
);

export default function App() {
  return (
    <Desktop>
      <GlobalStyle />
      <Browser />
      <Page />
      <Notifier />
      <BottomBar />
    </Desktop>
  );
}
